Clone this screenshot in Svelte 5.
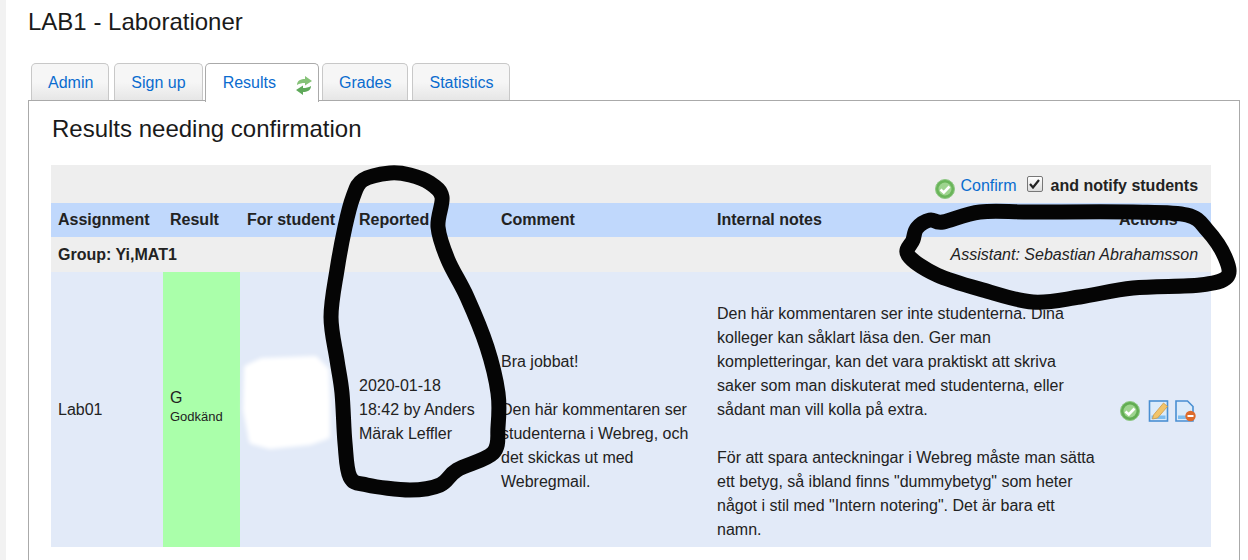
<script>
    const tabs = [
        { label: "Admin" },
        { label: "Sign up" },
        { label: "Results", active: true },
        { label: "Grades" },
        { label: "Statistics" },
    ];
    const columns = ["Assignment", "Result", "For student", "Reported", "Comment", "Internal notes", "Actions"];

    // the hand drawn circles on the screenshot, traced as closed curves
    const circleReported = [
        [390, 173], [363, 180], [353, 197], [345, 227], [337, 270], [331, 317], [337, 360], [342, 393],
        [345, 443], [350, 477], [367, 485], [410, 490], [440, 485], [457, 470], [493, 453], [498, 427],
        [498, 393], [487, 347], [467, 297], [448, 260], [438, 227], [442, 197], [430, 183], [410, 175],
    ];
    const circleAssistant = [
        [913, 240], [908, 255], [937, 275], [983, 290], [1033, 302], [1080, 297], [1133, 288], [1200, 285],
        [1227, 277], [1225, 257], [1207, 230], [1187, 215], [1133, 212], [1033, 212], [980, 212], [943, 222],
        [930, 220], [917, 228],
    ];

    function smooth(pts) {
        const n = pts.length;
        let d = `M${pts[0][0]} ${pts[0][1]}`;
        for (let i = 0; i < n; i++) {
            const p0 = pts[(i - 1 + n) % n];
            const p1 = pts[i];
            const p2 = pts[(i + 1) % n];
            const p3 = pts[(i + 2) % n];
            const c1x = p1[0] + (p2[0] - p0[0]) / 6;
            const c1y = p1[1] + (p2[1] - p0[1]) / 6;
            const c2x = p2[0] - (p3[0] - p1[0]) / 6;
            const c2y = p2[1] - (p3[1] - p1[1]) / 6;
            d += ` C${c1x} ${c1y} ${c2x} ${c2y} ${p2[0]} ${p2[1]}`;
        }
        return d + " Z";
    }
</script>

<div class="page">
    <h1>LAB1 - Laborationer</h1>

    <ul class="tabs">
        {#each tabs as t}
            <li class="tab" class:active={t.active}>
                <a href="#top">{t.label}</a>
                {#if t.active}
                    <svg class="sync" width="18" height="21" viewBox="0 0 18 20">
                        <path d="M2 9.500 C2 5 6 3.500 10 3.500 L10 0.500 L17 5.500 L10 10 L10 7.500 C7 7.500 4.500 8 2 9.500 Z" fill="#86c278" />
                        <path d="M16 10.500 C16 15 12 16.500 8 16.500 L8 19.500 L1 14.500 L8 10 L8 12.500 C11 12.500 13.500 12 16 10.500 Z" fill="#5fa95a" />
                    </svg>
                {/if}
            </li>
        {/each}
    </ul>

    <div class="panel">
        <h2>Results needing confirmation</h2>
        <table>
            <colgroup>
                <col style="width: 112px" />
                <col style="width: 77px" />
                <col style="width: 112px" />
                <col style="width: 142px" />
                <col style="width: 216px" />
                <col style="width: 402px" />
                <col style="width: 99px" />
            </colgroup>
            <thead>
                <tr class="toolbar">
                    <td colspan="7">
                        <div class="confirm">
                            <svg class="ok big" viewBox="0 0 20 20">
                                <circle cx="10" cy="10" r="9.500" fill="#6ab55a" stroke="#8fc885" />
                                <circle cx="10" cy="10" r="6.500" fill="#9ed48f" />
                                <path d="M5.500 10.500 L8.800 13.500 L14.500 7.500" fill="none" stroke="#fff" stroke-width="2.600" />
                            </svg>
                            <a href="#top">Confirm</a>
                            <span class="check">
                                <svg width="11" height="10" viewBox="0 0 11 10">
                                    <path d="M1 5 L4 8.500 L10 1" fill="none" stroke="#222" stroke-width="2.200" />
                                </svg>
                            </span>
                            <b>and notify students</b>
                        </div>
                    </td>
                </tr>
                <tr class="heads">
                    {#each columns as c}
                        <th>{c}</th>
                    {/each}
                </tr>
            </thead>
            <tbody>
                <tr class="group">
                    <td colspan="3"><b>Group: Yi,MAT1</b></td>
                    <td colspan="4" class="assistant">Assistant: Sebastian Abrahamsson</td>
                </tr>
                <tr class="result">
                    <td>Lab01</td>
                    <td class="grade">G<small>Godkänd</small></td>
                    <td></td>
                    <td>2020-01-18<br />18:42 by Anders Märak Leffler</td>
                    <td><br />Bra jobbat!<br /><br />Den här kommentaren ser studenterna i Webreg, och det skickas ut med Webregmail.</td>
                    <td class="notes">
                        <br />Den här kommentaren ser inte studenterna. Dina kolleger kan såklart läsa den. Ger man kompletteringar, kan det vara praktiskt att skriva saker som man diskuterat med studenterna, eller sådant man vill kolla på extra.<br /><br />
                        För att spara anteckningar i Webreg måste man sätta ett betyg, så ibland finns "dummybetyg" som heter något i stil med "Intern notering". Det är bara ett namn.
                    </td>
                    <td>
                        <div class="actions">
                            <svg class="ok" viewBox="0 0 20 20">
                                <circle cx="10" cy="10" r="9.500" fill="#62ad53" stroke="#8fc885" />
                                <circle cx="10" cy="10" r="6.500" fill="#9ed48f" />
                                <path d="M5.500 10.500 L8.800 13.500 L14.500 7.500" fill="none" stroke="#fff" stroke-width="2.600" />
                            </svg>
                            <svg class="doc" viewBox="0 0 20 22">
                                <rect x="1" y="1" width="18" height="20" fill="#dcebfa" stroke="#4a8fd2" stroke-width="1.600" />
                                <rect x="3" y="15.500" width="14" height="3.500" fill="#7dbdf0" />
                                <path d="M5 15 L15 3 L19 6.500 L9 18 L4 19 Z" fill="#f2c46a" stroke="#cf9a45" stroke-width="0.800" />
                            </svg>
                            <svg class="doc" viewBox="0 0 21 22">
                                <path d="M1 1 H12.500 L18 6.500 V21 H1 Z" fill="#dcebfa" stroke="#4a8fd2" stroke-width="1.600" />
                                <rect x="3" y="15.500" width="13" height="3.500" fill="#7dbdf0" />
                                <circle cx="15.500" cy="16" r="5.200" fill="#dd6a2c" />
                                <rect x="12.500" y="15" width="6" height="2" fill="#fff" />
                            </svg>
                        </div>
                    </td>
                </tr>
            </tbody>
        </table>
    </div>

    <!-- marks drawn on the screenshot, they lie over the table -->
    <svg class="marks" width="1248" height="560" viewBox="0 0 1248 560">
        <path class="blob" d="M247 368 L262 361 L290 360 L315 359 L326 370 L327 400 L327 436 L310 442 L270 446 L252 441 L246 410 Z" />
        <path class="ink" d={smooth(circleReported)} />
        <path class="ink" d={smooth(circleAssistant)} />
    </svg>
</div>

<style>
    :global(body) {
        margin: 0;
        background: #fff;
    }
    .page {
        position: relative;
        box-sizing: border-box;
        height: 560px;
        overflow: hidden;
        border-left: 6px solid #f2f2f2;
        padding: 0 8px 0 22px;
        font-family: "Liberation Sans", Arial, sans-serif;
        font-size: 16px;
        line-height: 24px;
        color: #222;
    }
    a {
        color: #0a6ccf;
        text-decoration: none;
    }
    h1 {
        margin: 0;
        padding-top: 8px;
        height: 63px;
        box-sizing: border-box;
        font-size: 24px;
        line-height: 28px;
        font-weight: normal;
        color: #1a1a1a;
    }
    .tabs {
        display: flex;
        height: 37px;
        margin: 0;
        padding: 0 0 0 3px;
        list-style: none;
        position: relative;
        z-index: 1;
    }
    .tab {
        box-sizing: border-box;
        display: flex;
        align-items: center;
        height: 37px;
        margin-right: 4px;
        padding: 2px 16px 0;
        border: 1px solid #c8c8c8;
        border-bottom: 0;
        border-radius: 5px 5px 0 0;
        background: linear-gradient(#f6f6f6 50%, #e6e6e6);
    }
    .tab:first-child {
        padding-right: 15px;
        margin-right: 5px;
    }
    .tab.active {
        height: 39px;
        margin-right: 3px;
        margin-left: -2px;
        padding: 0 5px 0 17px;
        border-color: #aaa;
        background: #fff;
    }
    .sync {
        margin: 4px 0 0 19px;
    }
    .panel {
        box-sizing: border-box;
        height: 500px;
        padding: 0 28px 0 22px;
        border: 1px solid #aaa;
    }
    h2 {
        margin: 0 0 0 1px;
        padding-top: 14px;
        height: 64px;
        box-sizing: border-box;
        font-size: 24px;
        line-height: 28px;
        font-weight: normal;
        color: #1a1a1a;
    }
    table {
        width: 1160px;
        table-layout: fixed;
        border-collapse: collapse;
    }
    td, th {
        padding: 0 7px;
        text-align: left;
    }
    .toolbar td {
        height: 38px;
        background: #eee;
        padding: 0 13px 0 0;
    }
    .confirm {
        box-sizing: border-box;
        display: flex;
        justify-content: flex-end;
        align-items: center;
        height: 38px;
        padding-top: 4px;
    }
    .ok {
        width: 20px;
        height: 20px;
    }
    .ok.big {
        margin: 5px 5px 0 0;
    }
    .check {
        box-sizing: border-box;
        display: flex;
        align-items: center;
        justify-content: center;
        width: 16px;
        height: 16px;
        margin: -4px 8px 0 10px;
        border: 1px solid #777;
        border-radius: 2px;
        background: linear-gradient(#fff, #dcdcdc);
    }
    .heads th {
        height: 34px;
        background: #c0d8fc;
    }
    .group td {
        height: 35px;
        background: #eee;
    }
    .assistant {
        text-align: right;
        font-style: italic;
        padding-right: 13px;
    }
    .result td {
        height: 275px;
        background: #e2eaf8;
        vertical-align: middle;
    }
    .result td.grade {
        background: #aaffaa;
        line-height: 20px;
    }
    .result td.notes {
        padding-right: 16px;
    }
    small {
        display: block;
        margin-bottom: 6px;
        font-size: 13px;
        line-height: 18px;
    }
    .actions {
        display: flex;
        align-items: center;
        gap: 8px;
        padding: 3px 0 0 1px;
    }
    .actions .doc + .doc {
        margin-left: -2px;
    }
    .doc {
        width: 21px;
        height: 22px;
    }
    .marks {
        position: absolute;
        top: 0;
        left: -6px;
    }
    .ink {
        fill: none;
        stroke: #050505;
        stroke-width: 15px;
        stroke-linejoin: round;
        filter: blur(0.7px);
    }
    .blob {
        fill: #fff;
        stroke: #fff;
        stroke-width: 6px;
        stroke-linejoin: round;
        filter: blur(2px);
    }
</style>
